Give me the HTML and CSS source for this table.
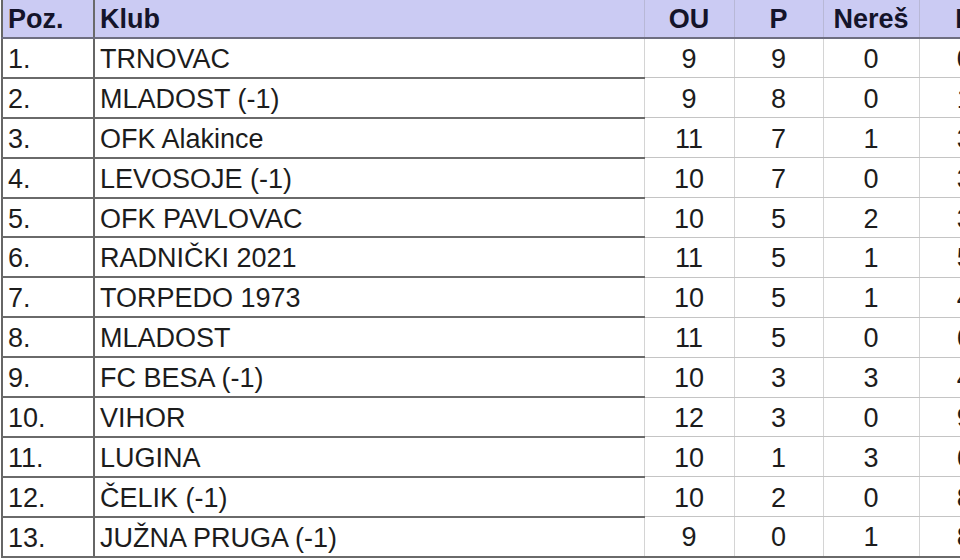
FILE: index.html
```html
<!DOCTYPE html>
<html>
<head>
<meta charset="utf-8">
<link rel="stylesheet" href="styles.css">
</head>
<body>
<table class="standings">
  <colgroup>
    <col class="c-poz"><col class="c-klub"><col class="c-ou"><col class="c-p"><col class="c-n"><col class="c-l">
  </colgroup>
  <thead>
    <tr>
      <th class="poz">Poz.</th>
      <th class="klub">Klub</th>
      <th class="num">OU</th>
      <th class="num">P</th>
      <th class="num">Nereš</th>
      <th class="num">P</th>
    </tr>
  </thead>
  <tbody>
    <tr><td class="poz">1.</td><td class="klub">TRNOVAC</td><td class="num">9</td><td class="num">9</td><td class="num">0</td><td class="num">0</td></tr>
    <tr><td class="poz">2.</td><td class="klub">MLADOST (-1)</td><td class="num">9</td><td class="num">8</td><td class="num">0</td><td class="num">1</td></tr>
    <tr><td class="poz">3.</td><td class="klub">OFK Alakince</td><td class="num">11</td><td class="num">7</td><td class="num">1</td><td class="num">3</td></tr>
    <tr><td class="poz">4.</td><td class="klub">LEVOSOJE (-1)</td><td class="num">10</td><td class="num">7</td><td class="num">0</td><td class="num">3</td></tr>
    <tr><td class="poz">5.</td><td class="klub">OFK PAVLOVAC</td><td class="num">10</td><td class="num">5</td><td class="num">2</td><td class="num">3</td></tr>
    <tr><td class="poz">6.</td><td class="klub">RADNIČKI 2021</td><td class="num">11</td><td class="num">5</td><td class="num">1</td><td class="num">5</td></tr>
    <tr><td class="poz">7.</td><td class="klub">TORPEDO 1973</td><td class="num">10</td><td class="num">5</td><td class="num">1</td><td class="num">4</td></tr>
    <tr><td class="poz">8.</td><td class="klub">MLADOST</td><td class="num">11</td><td class="num">5</td><td class="num">0</td><td class="num">6</td></tr>
    <tr><td class="poz">9.</td><td class="klub">FC BESA (-1)</td><td class="num">10</td><td class="num">3</td><td class="num">3</td><td class="num">4</td></tr>
    <tr><td class="poz">10.</td><td class="klub">VIHOR</td><td class="num">12</td><td class="num">3</td><td class="num">0</td><td class="num">9</td></tr>
    <tr><td class="poz">11.</td><td class="klub">LUGINA</td><td class="num">10</td><td class="num">1</td><td class="num">3</td><td class="num">6</td></tr>
    <tr><td class="poz">12.</td><td class="klub">ČELIK (-1)</td><td class="num">10</td><td class="num">2</td><td class="num">0</td><td class="num">8</td></tr>
    <tr><td class="poz">13.</td><td class="klub">JUŽNA PRUGA (-1)</td><td class="num">9</td><td class="num">0</td><td class="num">1</td><td class="num">8</td></tr>
  </tbody>
</table>
</body>
</html>
```
FILE: styles.css
```css
html, body {
  margin: 0;
  padding: 0;
  background: #ffffff;
  overflow: hidden;
  width: 960px;
  height: 560px;
}

.standings {
  border-collapse: collapse;
  table-layout: fixed;
  width: 1007px;
  margin-left: 1px;
  font-family: "Liberation Sans", Arial, sans-serif;
  font-size: 27px;
  color: #1c1c1c;
}

.c-poz { width: 92px; }
.c-klub { width: 550px; }
.c-ou { width: 90px; }
.c-p { width: 89px; }
.c-n { width: 96px; }
.c-l { width: 90px; }

.standings th {
  height: 35px;
  padding: 2px 5px 0;
  background: #cbcbf3;
  color: #14142a;
  font-weight: bold;
  text-align: left;
  border-bottom: 2px solid #6e6e80;
  border-left: 1px solid #b8b8d6;
  line-height: 1;
}

.standings th.poz {
  border-left: 2px solid #666;
}

.standings th.klub {
  border-left: 2px solid #6a6a6a;
}

.standings th.num {
  text-align: center;
}

.standings td {
  height: 34.9px;
  padding: 3px 5px 0;
  line-height: 1;
  white-space: nowrap;
  overflow: hidden;
}

.standings td.poz {
  border-left: 2px solid #666;
  border-bottom: 2px solid #6a6a6a;
}

.standings td.klub {
  border-left: 2px solid #666;
  border-bottom: 2px solid #6a6a6a;
}

.standings td.num {
  text-align: center;
  border-left: 1px solid #d4d4d4;
  border-bottom: 1px solid #c4c4c4;
}

.standings tbody tr:last-child td {
  border-bottom: 2px solid #6a6a6a;
}
```
